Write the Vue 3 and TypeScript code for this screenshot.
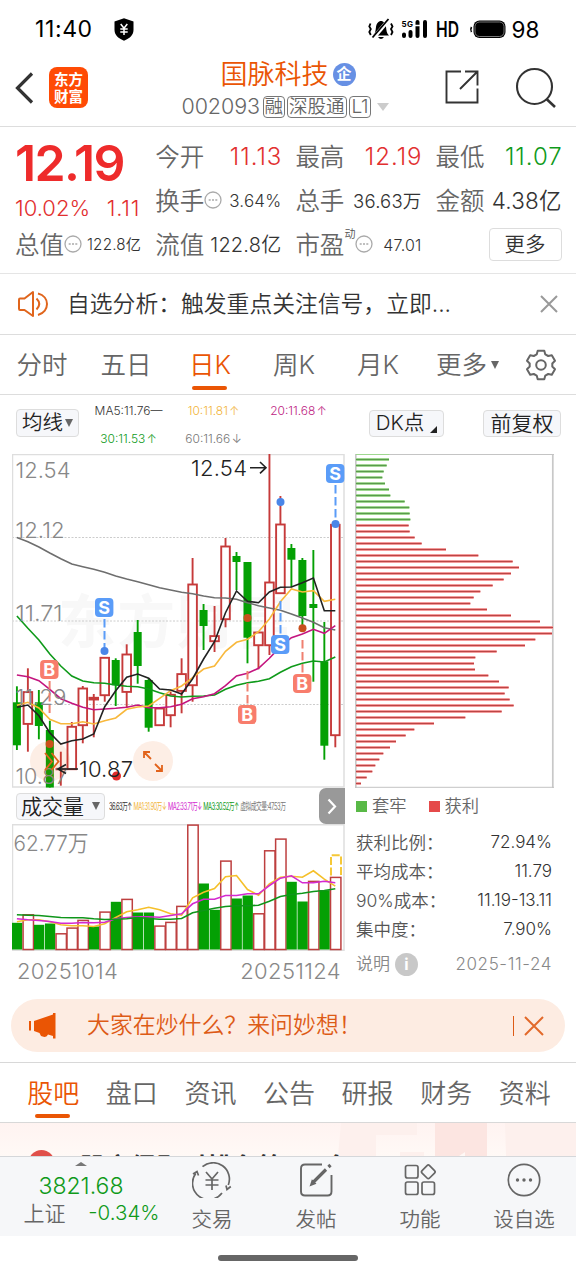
<script setup lang="ts">
type Candle = { up: boolean; open: number; close: number; high: number; low: number }

const cx = (i: number): number => 16.9 + i * 10.98

const candleRows: [number, number, number, number, number][] = [
  [0, 702.3, 745.3, 686.3, 750], [1, 691.3, 724.7, 668.3, 751.7], [0, 702.3, 726, 690, 739.3],
  [0, 730, 787.5, 720.7, 787.5], [1, 768, 769, 751.7, 785.7], [1, 726, 770, 722, 770],
  [1, 687.7, 726, 686, 743.3], [1, 697, 700.3, 694, 737.3], [1, 657, 696, 657, 701.7],
  [0, 660, 685.3, 658.3, 706], [1, 653.7, 692.7, 644.3, 707.7], [0, 632, 666, 620, 683.7],
  [0, 680, 727.7, 678.3, 731.7], [1, 707.7, 726, 707.7, 726], [1, 694, 716, 691.7, 727.3],
  [1, 673.3, 691.7, 658.3, 713.3], [1, 583.7, 686, 558, 701.7], [0, 610, 626, 604, 650],
  [1, 635.3, 642, 606, 652], [1, 545.7, 620, 538, 627.3], [0, 556, 562, 552, 590],
  [0, 562, 637.7, 562, 663.3], [1, 631.7, 646, 631.7, 669.3], [1, 581.7, 646, 454, 655],
  [1, 523.7, 594, 496, 594], [0, 548, 559.7, 544, 587.3], [0, 560, 616, 558, 628],
  [0, 604, 608, 550, 681.7], [0, 661.3, 745.7, 622, 759.7], [1, 524, 736, 524, 747.3],
]
const candles: Candle[] = candleRows.map(([up, open, close, high, low]) => ({ up: up === 1, open, close, high, low }))

const line = (ys: number[]): string => ys.map((y, i) => `${cx(i).toFixed(1)},${y}`).join(' ')

const averages: { color: string; pts: string }[] = [
  { color: '#6e6e6e', pts: line([537.5, 541.7, 547, 553, 558.7, 564, 566.7, 569.3, 572.3, 576, 579, 581.7, 584.7, 587.7, 590, 592.3, 593.7, 596, 597.7, 598, 599.3, 602.7, 605.7, 608, 610.3, 614, 618, 622.3, 627.7, 630]) },
  { color: '#0f9a1a', pts: line([616, 628.3, 640, 654, 666, 676, 681, 682.7, 683.3, 685, 686.3, 686.7, 689, 692.7, 696, 697, 696.3, 696, 695, 689.3, 685.3, 682.7, 681.3, 678.7, 672.3, 666.7, 663.3, 661, 662, 657]) },
  { color: '#c4157f', pts: line([675, 676.7, 680.7, 689.3, 698.7, 703.3, 707.3, 709.7, 709, 708.3, 707.3, 705, 707.7, 707.7, 706.7, 704.3, 698.7, 696.7, 693.7, 685.7, 676, 673.3, 668.3, 658.3, 646.7, 637.7, 634, 629.3, 633.3, 625.7]) },
  { color: '#f8b83c', pts: line([705.3, 702.3, 708, 719.3, 723.7, 723.7, 721.7, 724, 720.7, 718, 709.3, 707, 706, 698.3, 690.7, 686, 677.7, 669, 666, 651.3, 642.3, 639.3, 631.7, 619, 601.7, 589, 592, 590.7, 601.3, 599.3]) },
  { color: '#222', pts: line([707.3, 705, 715.7, 732.7, 744, 740.7, 739, 734, 706.7, 690.7, 677.3, 674, 678.3, 689, 690, 694, 678.7, 659, 641.7, 612.7, 591, 601.3, 602.7, 592, 587.3, 587, 582.7, 578, 610.7, 610.7]) },
]

const axis: { t: string; y: number; w: number }[] = [
  { t: '12.54', y: 477.7, w: 55 }, { t: '12.12', y: 537.7, w: 49 }, { t: '11.71', y: 621, w: 47 },
  { t: '11.29', y: 705, w: 51 }, { t: '10.87', y: 784, w: 52 },
]

const marks: { k: 'S' | 'B'; x: number; y: number; from: number; to: number; dot: number }[] = [
  { k: 'S', x: 104.2, y: 607.5, from: 619, to: 651, dot: 651 },
  { k: 'S', x: 335.2, y: 473.5, from: 485, to: 522, dot: 524 },
  { k: 'S', x: 280.2, y: 644.5, from: 601, to: 634, dot: 502 },
  { k: 'B', x: 49.3, y: 669.5, from: 681, to: 713, dot: 744 },
  { k: 'B', x: 247.2, y: 714.5, from: 671, to: 704, dot: 618 },
  { k: 'B', x: 302.2, y: 683.5, from: 640, to: 673, dot: 628.3 },
]

const volRows: [number, number][] = [
  [0, 922.3], [1, 914.3], [0, 924.3], [0, 923], [1, 933.3], [1, 927.6], [1, 919.9], [0, 926], [1, 911.6], [0, 901.3],
  [1, 898.9], [0, 912], [0, 912], [1, 925.6], [1, 921.9], [1, 905.9], [1, 824.6], [0, 883], [0, 909.3], [1, 860.6],
  [0, 898], [0, 895], [1, 913.3], [1, 850.3], [1, 838.6], [0, 881.3], [0, 901], [1, 880.9], [0, 889.7], [1, 876.9],
]
const vline = (ys: number[]): string => line(ys.map((y) => +(780 + y / 3).toFixed(1)))
const volLines: { color: string; pts: string }[] = [
  { color: '#f5c02a', pts: vline([424, 418, 418, 424, 433, 436, 436, 438, 430, 411, 394, 388, 380, 388, 400, 404, 352, 335, 324, 289, 285, 327, 344, 310, 290, 287, 290, 271, 296, 317]) },
  { color: '#d42ad0', pts: vline([415, 418, 420, 423, 428, 428, 426, 427, 425, 415, 411, 409, 409, 410, 405, 400, 370, 356, 356, 345, 345, 340, 340, 315, 293, 286, 307, 307, 302, 307]) },
  { color: '#0f961a', pts: vline([403, 404, 405, 408, 411, 412, 412, 415, 417, 416, 415, 411, 414, 416, 416, 414, 397, 390, 383, 378, 376, 376, 374, 362, 348, 342, 338, 333, 330, 325]) },
]

const chips: number[] = [
  118, 117, 110, 101, 97, 105, 117, 121, 164, 178, 179, 181,
  176, 179, 194, 215, 288, 385, 488, 507, 483, 461, 428, 391, 371, 361, 411, 483, 570, 609, 606, 556, 525, 440, 376, 372,
  375, 415, 447, 476, 464, 479, 491, 455, 346, 252, 193, 167, 138, 120, 100, 88, 76, 67, 50, 33,
].map((v) => 350 + v / 3)

const stats: [string, string][] = [
  ['获利比例：', '72.94%'], ['平均成本：', '11.79'], ['90%成本：', '11.19-13.11'], ['集中度：', '7.90%'],
]
const periods: string[] = ['分时', '五日', '日K', '周K', '月K']
const sections: string[] = ['股吧', '盘口', '资讯', '公告', '研报', '财务', '资料']
</script>

<template>
  <main class="app">
    <div class="status">
      <span class="clock">11:40</span>
      <svg class="shield" width="20" height="23" viewBox="0 0 20 23">
        <path d="M10 .3 19.5 3.6V12c0 5-4 8.500-9.500 10.700C4.500 20.500.5 17 .5 12V3.600z" fill="#000" />
        <path d="M6.700 6 10 10.300 13.300 6M10 10.300V17M6.300 11h7.400M6.300 14h7.400" fill="none" stroke="#fff" stroke-width="1.500" />
      </svg>
      <svg class="signals" width="172" height="24" viewBox="368 16 172 24">
        <path d="M373 34.500c2.500-2 2.500-5 3-8.500.5-3.500 2.500-6 5-6s4.500 2.500 5 6 .5 6.500 3 8.500zM378 36h6q-3 4-6 0z" />
        <path d="M373 37.500 389 18.500" stroke="#fff" stroke-width="4" />
        <path d="M372.500 36.500 388.500 18" stroke="#000" stroke-width="1.800" />
        <path d="M370.500 22.500l-1.200 3 1.500 2.500-1.500 3 1.500 3M391 22.500l1.500 3-1.500 2.500 1.500 3-1.500 3" fill="none" stroke="#000" stroke-width="1.800" />
        <text x="401.500" y="25.500" font-size="8" font-weight="700" textLength="11.500">5G</text>
        <path d="M404 33.500V35M410.500 31V35M417.500 21v14M425 21V35" stroke="#000" stroke-width="4" stroke-linecap="round" />
        <path d="M415 24.500h5" stroke="#fff" stroke-width="1.500" />
        <text x="436" y="36.300" font-size="21" font-weight="600" textLength="23" lengthAdjust="spacingAndGlyphs">HD</text>
        <rect x="473.500" y="19.500" width="32" height="17.500" rx="6" fill="#000" />
        <rect x="475" y="21" width="29" height="14.500" rx="4.500" fill="none" stroke="#aaa" stroke-width=".7" />
        <path d="M471.500 26q-1.500 2.500 0 5" fill="none" stroke="#000" stroke-width="1.600" />
        <text x="511.500" y="36.500" font-size="22.500" font-weight="400" textLength="28">98</text>
      </svg>
    </div>

    <header class="head">
      <svg class="back" width="20" height="34" viewBox="0 0 20 34"><path d="M17 2.500 2.500 17 17 31.500" fill="none" stroke="#333" stroke-width="3.200" /></svg>
      <div class="brand"><span>东方</span><span>财富</span></div>
      <div class="title">
        <div class="name">国脉科技<i>企</i></div>
        <div class="code"><span class="num">002093</span><b>融</b><b>深股通</b><b class="lv">L1</b><em></em></div>
      </div>
      <svg class="share" width="36" height="36" viewBox="444 69 36 36">
        <path d="M461 71.500h-14.500v31h31v-14M465 71.500h12.500v14M477 72 460 89" fill="none" stroke="#333" stroke-width="1.900" />
      </svg>
      <svg class="search" width="42" height="42" viewBox="515 66 42 42">
        <circle cx="534.500" cy="85.500" r="17.500" fill="none" stroke="#333" stroke-width="2.100" /><path d="M546.500 98 555 106" stroke="#333" stroke-width="2.600" />
      </svg>
    </header>

    <section class="quote">
      <div class="col first">
        <div class="price">12.19</div>
        <div class="chg"><span>10.02%</span><span>1.11</span></div>
        <div class="cell"><span class="lb">总值</span><svg class="dots" viewBox="0 0 18 18"><circle cx="9" cy="9" r="8" /><path d="M4.700 9h2M8 9h2M11.300 9h2" /></svg><span class="v s3">122.8亿</span></div>
      </div>
      <div class="col">
        <div class="cell"><span class="lb">今开</span><span class="v s0 red">11.13</span></div>
        <div class="cell"><span class="lb">换手</span><svg class="dots" viewBox="0 0 18 18"><circle cx="9" cy="9" r="8" /><path d="M4.700 9h2M8 9h2M11.300 9h2" /></svg><span class="v s4">3.64%</span></div>
        <div class="cell"><span class="lb">流值</span><span class="v s2">122.8亿</span></div>
      </div>
      <div class="col">
        <div class="cell"><span class="lb">最高</span><span class="v s0 red">12.19</span></div>
        <div class="cell"><span class="lb">总手</span><span class="v s5">36.63万</span></div>
        <div class="cell"><span class="lb">市盈</span><sup>动</sup><svg class="dots" viewBox="0 0 18 18"><circle cx="9" cy="9" r="8" /><path d="M4.700 9h2M8 9h2M11.300 9h2" /></svg><span class="v s6">47.01</span></div>
      </div>
      <div class="col">
        <div class="cell"><span class="lb">最低</span><span class="v s0 green">11.07</span></div>
        <div class="cell"><span class="lb">金额</span><span class="v s1">4.38亿</span></div>
        <button class="more">更多</button>
      </div>
    </section>

    <section class="notice">
      <svg width="32" height="28" viewBox="16 289 32 28" fill="none" stroke="#e0651c" stroke-width="2" stroke-linejoin="round">
        <path d="M19 297.500h4.500l8.500-6.500v24l-8.500-6H19q-1 0-1-1.200v-9q0-1.300 1-1.300zM35.500 297.500q5.500 5.500 0 11M37 292.500c12 3 12 18 0 21.500" />
      </svg>
      <p>自选分析：触发重点关注信号，立即<span>...</span></p>
      <svg class="close" width="18" height="18" viewBox="0 0 18 18"><path d="M1 1l16 16M17 1 1 17" stroke="#999" stroke-width="2" /></svg>
    </section>

    <nav class="periods">
      <a v-for="p in periods" :key="p" :class="{ on: p === '日K' }">{{ p }}</a>
      <a class="drop">更多<em></em></a>
      <svg width="32" height="32" viewBox="-16 -16 32 32" fill="none" stroke="#666" stroke-width="2" stroke-linejoin="round">
        <path d="M-3.300-14.300H3.300L4.300-10.600 7.200-9 10.800-9.800 14-4.200 11.300-1.500V1.500L14 4.200 10.800 9.800 7.200 9 4.300 10.600 3.300 14.300H-3.300L-4.300 10.600-7.200 9-10.800 9.800-14 4.200-11.300 1.500V-1.500L-14-4.200-10.800-9.800-7.200-9-4.300-10.600z" />
        <circle r="4.800" />
      </svg>
    </nav>

    <div class="indicators">
      <button class="pill ma">均线<em></em></button>
      <div class="malist">
        <span>MA5:11.76—</span><span class="y">10:11.81 ↑</span><span class="m">20:11.68 ↑</span>
        <span class="g">30:11.53 ↑</span><span class="k">60:11.66 ↓</span>
      </div>
      <button class="pill dk">DK点<em></em></button>
      <button class="pill fq">前复权</button>
    </div>

    <section class="charts">
      <div class="left">
        <svg class="kline" width="334" height="334" viewBox="12 454 334 334">
          <text x="58" y="643" class="wm" textLength="236">东方财富</text>
          <path d="M12 537.500H344M12 621H344M12 704.500H344" stroke="#ccc" stroke-dasharray="2 1.500" />
          <rect x="12.500" y="454.500" width="331.500" height="332.500" fill="none" stroke="#dedede" stroke-width="1.500" />
          <g v-for="(c, i) in candles" :key="i" :stroke="c.up ? '#c63a3a' : '#04a004'" :fill="c.up ? '#fff' : '#04a004'">
            <path :d="`M${cx(i)} ${c.high}V${c.low}`" stroke-width="1.900" />
            <rect v-if="c.up" :x="cx(i) - 4.300" :y="c.open + 0.800" width="8.600" :height="Math.max(c.close - c.open - 1.600, 0.500)" stroke-width="1.900" />
            <rect v-else :x="cx(i) - 4" :y="c.open" width="8" :height="c.close - c.open" stroke="none" />
          </g>
          <polyline v-for="a in averages" :key="a.color" :points="a.pts" fill="none" :stroke="a.color" stroke-width="1.600" />
          <text v-for="a in axis" :key="a.t" x="15.500" :y="a.y" class="ax" :textLength="a.w" lengthAdjust="spacingAndGlyphs">{{ a.t }}</text>
          <g v-for="m in marks" :key="m.x" :fill="m.k === 'S' ? '#5a9cf8' : '#f87d6c'">
            <path :d="`M${m.x + 0.300} ${m.from}V${m.to}`" :stroke="m.k === 'S' ? '#5a9cf8' : '#f08070'" stroke-width="2" stroke-dasharray="8.500 3.500" />
            <circle :cx="m.x + 0.300" :cy="m.dot" r="4" :fill="m.k === 'S' ? '#4a86e8' : '#c8501e'" />
            <rect :x="m.x - 9.200" :y="m.y - 9.500" width="18.400" height="19" rx="4" />
            <text :x="m.x" :y="m.y + 6.600" class="mk">{{ m.k }}</text>
          </g>
          <circle cx="50" cy="761" r="20" fill="#ea5504" opacity=".1" /><circle cx="153" cy="761" r="20" fill="#ea5504" opacity=".1" />
          <path d="M45 753l7 8.500-7 8.500M51.500 753l7 8.500-7 8.500M151 759l-7-7M144 758v-6h6M155 764l7 7M156 771h6v-6" fill="none" stroke="#e2631b" stroke-width="1.800" />
          <circle cx="116.500" cy="776" r="4.500" fill="#e32b2b" />
          <g class="ext"><text x="191" y="475.700" textLength="56">12.54</text><text x="79" y="776.500" textLength="54">10.87</text>
            <path d="M250 467.700h15M260 462l6 5.700-6 5.700M58 769h20M66 764.500l-8 4.500 8 4.500" fill="none" stroke="#222" stroke-width="1.600" /></g>
        </svg>
        <div class="volbar">
          <button class="pill vb">成交量<em></em></button>
          <div class="tinybox"><p class="tiny"><span>36.63万↑</span><span class="y">MA1:31.90万↓</span><span class="v2">MA2:33.71万↓</span><span class="g">MA3:30.52万↑</span><span class="k">虚拟成交量:47.53万</span></p></div>
          <div class="flip"><svg width="10" height="17" viewBox="0 0 10 17"><path d="M1.500 1.500 8 8.500 1.500 15.500" fill="none" stroke="#fff" stroke-width="2.200" /></svg></div>
        </div>
        <svg class="vol" width="334" height="127" viewBox="12 823.500 334 127">
          <rect x="12.500" y="824.200" width="331.500" height="125.500" fill="none" stroke="#dedede" stroke-width="1.500" />
          <template v-for="([up, y], i) in volRows" :key="i">
            <rect v-if="up" :x="cx(i) - 4.800" :y="y" width="10.400" :height="949 - y" fill="#fff" stroke="#bd3f3f" stroke-width="1.500" />
            <rect v-else :x="cx(i) - 4.900" :y="y" width="10.300" :height="949 - y" fill="#04a004" />
          </template>
          <path d="M331 875V854.700H341V875" fill="none" stroke="#f5c838" stroke-width="2" stroke-dasharray="8 2.500" />
          <polyline v-for="a in volLines" :key="a.color" :points="a.pts" fill="none" :stroke="a.color" stroke-width="1.600" />
          <text x="13.500" y="850" class="ax" textLength="75" lengthAdjust="spacingAndGlyphs">62.77万</text>
        </svg>
        <div class="dates"><span>20251014</span><span>20251124</span></div>
      </div>

      <div class="right">
        <svg class="chips" width="200" height="334" viewBox="355 454 200 334">
          <path d="M355.800 454V788M552.800 454V788" stroke="#c8c8c8" stroke-width="1.700" /><path d="M355 454.500H554M355 787.300H554" stroke="#c4c4c4" />
          <g v-for="(x, i) in chips" :key="i">
            <path :d="`M356 ${453.500 + i * 6}H${x}`" :stroke="i < 12 ? '#9fd890' : '#f59a9a'" stroke-width="2.800" />
            <path :d="`M356 ${453.500 + i * 6}H${x}`" :stroke="i < 12 ? '#5a9a4c' : '#bb4545'" stroke-width="1.100" />
          </g>
        </svg>
        <div class="legend"><i class="lg"></i>套牢<i class="lr"></i>获利</div>
        <dl>
          <div v-for="s in stats" :key="s[0]"><dt>{{ s[0] }}</dt><dd>{{ s[1] }}</dd></div>
        </dl>
        <div class="explain"><span>说明</span><i>i</i><time>2025-11-24</time></div>
      </div>
    </section>

    <aside class="promo">
      <svg width="28" height="26" viewBox="0 0 28 26" fill="#ea5504"><path d="M0 8h2v9.500H0zM5 8l19-6.500V0h2.500v25.500H24V23l-5-1.500q-1 3-4.500 2.300L12 23l-1.500-3L5 18z" /></svg>
      <p>大家在炒什么？来问妙想！</p>
      <i></i>
      <svg width="20" height="20" viewBox="0 0 20 20"><path d="M1 1l18 18M19 1 1 19" stroke="#e2692a" stroke-width="2" /></svg>
    </aside>

    <nav class="sections">
      <a v-for="s in sections" :key="s" :class="{ on: s === '股吧' }">{{ s }}</a>
    </nav>

    <div class="peek">
      <svg class="deco" width="576" height="33" viewBox="0 0 576 33">
        <path d="M341 0H417V12H376V33H338zM400 29h24v4h-24zM505 0h71v33h-70z" fill="#fdf0ed" /><path d="M435 0h52v33h-22v-4l-6 4h-24z" fill="#fce5e1" />
        <circle cx="41.500" cy="40" r="13" fill="#e0504a" />
      </svg>
      <p>股市促即时排名第<b>100</b>名</p>
    </div>

    <footer class="dock">
      <div class="index">
        <em></em>
        <strong>3821.68</strong>
        <div><span>上证</span><b>-0.34%</b></div>
      </div>
      <a><svg width="40" height="36" viewBox="-20 -18 40 36" fill="none" stroke="#666" stroke-width="1.700">
        <path d="M-9.500-13.300A16.300 16.300 0 0 1 16.300 5M10 13A16.300 16.300 0 0 1-16.300-6.500M-19-6l4-2.500 1.500 4M18.800 6.500 15 9.500l-1-4M-6-8 0-1 6-8M0-1V10M-6.500 0h13M-6.500 5h13" /></svg>交易</a>
      <a><svg width="34" height="36" viewBox="-17 -18 34 36" fill="none" stroke="#666" stroke-width="1.900">
        <path d="M6-15.500h-17q-4 0-4 4v23q0 4 4 4h22.500q4 0 4-4V-5" /><path d="M-2.500 2 10-10.500" stroke-width="3.200" /><path d="M-5 5l1.300-4 2.500 2.500z" fill="#666" /><path d="M12.500-13l2-2" stroke-width="3.200" /></svg>发帖</a>
      <a><svg width="34" height="36" viewBox="-17 -18 34 36" fill="none" stroke="#666" stroke-width="1.700">
        <rect x="-14.500" y="-14.500" width="12.500" height="12.500" rx="2" /><rect x="-14.500" y="2" width="12.500" height="12.500" rx="2" /><rect x="2" y="2" width="12.500" height="12.500" rx="2" /><rect x="3" y="-13.500" width="10.600" height="10.600" rx="1.800" transform="rotate(45 8.300 -8.200)" /></svg>功能</a>
      <a><svg width="36" height="36" viewBox="-18 -18 36 36" fill="#666"><circle r="15.700" fill="none" stroke="#666" stroke-width="1.700" /><circle cx="-6.500" r="1.700" /><circle r="1.700" /><circle cx="6.500" r="1.700" /></svg>设自选</a>
    </footer>
    <div class="home"><i></i></div>
  </main>
</template>

<style>
html, body { background: #fff; }
</style>
<style scoped>
* { box-sizing: border-box; }
.app { width: 576px; height: 1280px; overflow: hidden; background: #fff; color: #333; font-family: Inter, "Noto Sans CJK SC", sans-serif; font-weight: 350; line-height: 1; }
p, dl, dd { margin: 0; }
svg { display: block; flex: none; }
button { font: inherit; color: inherit; padding: 0; }
i, em { font-style: normal; }
.status { height: 56px; display: flex; align-items: center; padding: 2px 0 0 35px; }
.clock { font-size: 23px; font-weight: 400; width: 79px; color: #000; letter-spacing: .6px; }
.signals { margin-left: 234px; }

.head { height: 71px; border-bottom: 1px solid #ddd; display: flex; padding-left: 15px; }
.back { margin-top: 15px; }
.brand { margin: 11px 0 0 14px; width: 39px; height: 41px; border-radius: 8px; background: #ff4b05; color: #fff; font-weight: 700; font-size: 14.500px; display: flex; flex-direction: column; align-items: center; justify-content: center; line-height: 17px; }
.title { width: 226px; margin-left: 87px; display: flex; flex-direction: column; align-items: center; margin-right: 43px; }
.name { margin-top: 5px; height: 27px; line-height: 27px; display: flex; align-items: center; font-size: 27px; color: #ea5504; }
.name i { margin-left: 4px; width: 23px; height: 23px; border-radius: 50%; background: #6790e4; color: #fff; font-size: 15px; line-height: 22px; text-align: center; font-weight: 600; }
.code { display: flex; align-items: center; margin-top: 7px; height: 23px; color: #666; width: 213px; }
.num { font-size: 21.500px; width: 81px; letter-spacing: -.1px; }
.code b { border: 1px solid #777; border-radius: 4px; font-weight: 350; font-size: 18.500px; height: 22px; line-height: 19px; padding: 0 1px; margin-right: 2px; }
.code .lv { padding: 0 2px; font-size: 19px; letter-spacing: -.5px; }
.code em { margin-left: 4px; border: 6.500px solid transparent; border-top: 8px solid #ccc; border-bottom: 0; }
.share { margin-top: 13px; }
.search { margin: 11px 0 0 35px; }

.quote { height: 147px; border-bottom: 1px solid #e5e5e5; padding: 8px 14px 0 15px; display: grid; grid-template-columns: repeat(4, 126.200px); column-gap: 14px; }
.cell { height: 44px; display: flex; align-items: center; }
.lb { font-size: 24.500px; color: #666; }
.v { margin-left: auto; white-space: nowrap; letter-spacing: .2px; }
.dots { width: 18px; height: 18px; margin-top: -3px; fill: none; stroke: #aaa; stroke-width: 1.300; }
.s0 { font-size: 24px; letter-spacing: 1px; margin-right: -1px; } .s1 { font-size: 22.500px; } .s2 { font-size: 20px; } .s3 { font-size: 15.200px; } .s4 { font-size: 17px; } .s5 { font-size: 18.500px; } .s6 { font-size: 16px; }
.red { color: #e22f2f; } .green { color: #0f9a1a; }
.price { height: 58px; line-height: 57px; font-size: 50px; font-weight: 600; color: #ee2b2b; letter-spacing: -1.600px; }
.chg { height: 30px; display: flex; justify-content: space-between; align-items: center; color: #e22f2f; font-size: 22px; margin-right: 1px; }
.chg span + span { letter-spacing: .8px; }
sup { font-size: 11px; align-self: flex-start; margin-top: 6px; line-height: 11px; color: #555; }
.more { margin-left: 53px; margin-top: 5px; width: 73px; height: 33px; border: 1px solid #ddd; border-radius: 4px; background: #fff; font-size: 20.500px; display: block; line-height: 30px; }

.notice { height: 61px; border-bottom: 1px solid #ddd; display: flex; align-items: center; padding: 0 18px 0 17px; }
.notice p { margin-left: 18px; font-size: 22.800px; white-space: nowrap; flex: 1; }
.periods { height: 60px; border-bottom: 1px solid #ddd; display: flex; align-items: center; font-size: 25.500px; color: #666; }
.periods a { width: 84px; height: 59px; line-height: 60px; text-align: center; position: relative; }
.periods .on { color: #ea5504; }
.periods .on::after, .sections .on::after { content: ""; position: absolute; left: 24px; bottom: 4px; width: 35px; height: 4px; border-radius: 2px; background: #ea5504; }
.periods .drop { width: 105px; display: flex; align-items: center; padding-left: 16px; }
.drop em { margin-left: 4px; border: 4.500px solid transparent; border-top: 8px solid #666; border-bottom: 0; }

.indicators { height: 59px; display: flex; padding-left: 16px; }
.pill { background: #f6f7fa; border: 1px solid #ddd; border-radius: 4px; display: flex; align-items: center; justify-content: center; color: #222; font-size: 20.500px; height: 27px; white-space: nowrap; flex: none; }
.pill em { margin-left: 2px; border: 4.500px solid transparent; border-top: 8px solid #666; border-bottom: 0; }
.ma { width: 63px; height: 28px; margin-top: 14px; }
.dk { width: 75px; margin: 15px 39px 0 28px; }
.dk em { border: 0; border-left: 7px solid transparent; border-bottom: 7px solid #222; margin: 12px 0 0 6px; }
.fq { width: 78px; margin-top: 15px; font-size: 21px; }
.malist { width: 255px; margin-left: 7px; margin-top: 2px; display: grid; grid-template-columns: repeat(3, 85px); grid-auto-rows: 28px; text-align: center; font-size: 12px; line-height: 28px; white-space: nowrap; word-spacing: -2px; }
.y { color: #f2b53c; } .m { color: #bd1c82; } .g { color: #0f9a1a; } .k { color: #777; } .v2 { color: #d42ad0; }

.charts { display: flex; padding-left: 12px; height: 545px; }
.left { width: 334px; margin-right: 9px; }
.right { width: 200px; }
.ax { font-size: 22px; fill: #888; }
.wm { font-size: 58px; font-weight: 700; fill: #f8f8f8; }
.mk { font-size: 18px; font-weight: 700; fill: #fff; text-anchor: middle; }
.ext { font-size: 22px; fill: #222; }
.volbar { height: 36px; display: flex; align-items: center; padding-left: 4px; width: 333px; }
.vb { width: 89px; height: 27px; font-size: 21px; }
.vb em { margin-left: 8px; }
.tinybox { width: 210px; padding-left: 4px; }
.tiny { display: flex; width: 300px; font-size: 10px; white-space: nowrap; letter-spacing: -.9px; gap: 3px; font-weight: 400; transform: scaleX(.58); transform-origin: left center; }
.flip { width: 26px; height: 36px; margin-left: auto; border-radius: 7px 0 0 7px; background: #999; display: flex; align-items: center; justify-content: center; }
.vol { margin-top: -.5px; }
.dates { display: flex; justify-content: space-between; padding: 9px 5px 0; font-size: 22px; color: #888; letter-spacing: .35px; }
.legend { height: 36px; display: flex; align-items: center; font-size: 17.300px; color: #666; }
.legend i { width: 11px; height: 11px; margin: 0 5px 0 1px; background: #59b947; }
.legend .lr { background: #e54a4a; margin-left: 22px; }
dl { padding: 4px 3px 0 1px; font-size: 17px; }
dl div { height: 29px; display: flex; justify-content: space-between; align-items: center; }
dt { color: #555; font-size: 17.500px; }
.explain { display: flex; height: 40px; align-items: center; color: #888; font-size: 17px; padding: 0 3px 0 1px; }
.explain i { width: 23px; height: 23px; border-radius: 50%; background: #c8c8c8; color: #fff; text-align: center; line-height: 23px; font-weight: 700; font-size: 16px; margin-left: 5px; }
.explain time { margin-left: auto; letter-spacing: .6px; }

.promo { margin: 0 11px; height: 53px; border-radius: 27px; background: #fdece2; display: flex; align-items: center; padding: 0 21px 0 18px; color: #dd5b16; }
.promo p { margin-left: 30px; font-size: 22.900px; flex: 1; white-space: nowrap; }
.promo i { width: 1px; height: 20px; background: #dd5b16; margin-right: 10px; }
.sections { margin-top: 10px; height: 61px; border: solid #d8d8d8; border-width: 1px 0; display: flex; padding: 0 12px 0 14px; font-size: 26px; color: #666; }
.sections a { flex: 1; text-align: center; line-height: 62px; position: relative; }
.sections .on { color: #ea5504; }
.sections .on::after { left: 21px; }
.peek { height: 33px; background: linear-gradient(#fff3f1, #fff9f6); overflow: hidden; position: relative; }
.deco { position: absolute; left: 0; top: 0; }
.peek p { position: relative; padding: 30.500px 0 0 80px; font-size: 25.400px; font-weight: 700; white-space: nowrap; }
.peek b { color: #e0504a; letter-spacing: -2.400px; margin-right: 2px; }
.dock { height: 80px; background: #f6f7f9; border-top: 1px solid #d5d7da; display: flex; color: #666; position: relative; }
.index { width: 160px; display: flex; flex-direction: column; align-items: center; }
.index em { margin: 5px 0 0 1px; border: 6.500px solid transparent; border-bottom: 4px solid #777; border-top: 0; }
.index strong { color: #0f9a1a; font-size: 23px; font-weight: 350; margin: 9px 0 0 2px; height: 24px; }
.index div { display: flex; justify-content: space-between; align-items: center; width: 136px; margin-left: 23px; margin-top: 4px; font-size: 21px; }
.index b { color: #0f9a1a; font-weight: 350; font-size: 20.500px; }
.dock a { width: 104px; display: flex; flex-direction: column; align-items: center; padding-top: 5px; gap: 12px; font-size: 20.500px; }
.home { height: 44px; display: flex; justify-content: center; }
.home i { width: 140px; height: 6px; border-radius: 3px; background: #666; margin-top: 19px; }
</style>
